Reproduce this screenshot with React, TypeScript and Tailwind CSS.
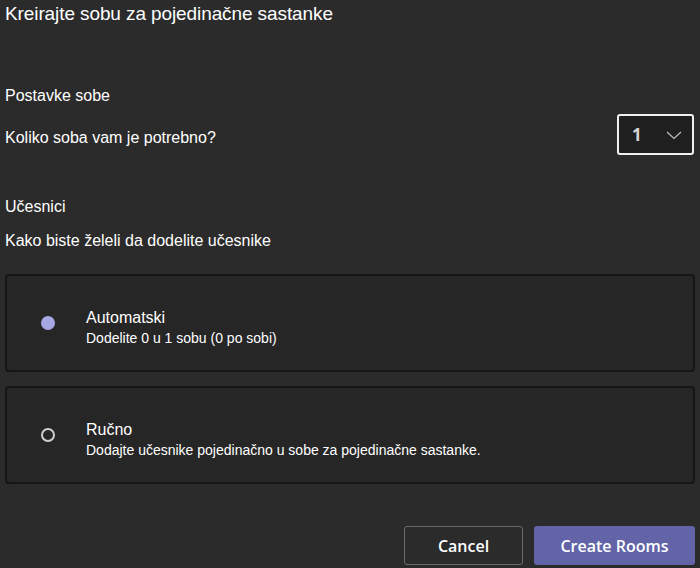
import React from "react";

export default function App() {
  return (
    <div className="w-[700px] h-[568px] bg-[#2b2b2b] text-white px-[5px] flex flex-col" style={{ fontFamily: '"Liberation Sans", Arial, sans-serif' }}>
      <h1 className="pt-[2px] text-[19px] leading-[24px] tracking-[-0.1px]">Kreirajte sobu za pojedinačne sastanke</h1>

      <div className="mt-[60px] text-[16px] leading-[20px]">Postavke sobe</div>
      <div className="mt-[8px] flex justify-between">
        <div className="pt-[14px] text-[16px] leading-[20px]">Koliko soba vam je potrebno?</div>
        <button className="mr-px w-[77px] h-[41px] rounded-[3px] border-2 border-[#f0f0f0] bg-[#1f1f1f] flex items-center justify-between pl-[13px] pr-[10px]">
          <span className="text-[17px] font-bold text-[#d6d6d6]" style={{ fontFamily: '"Open Sans", sans-serif' }}>1</span>
          <svg width="16" height="10" viewBox="0 0 16 10" fill="none" stroke="#bdbdbd" strokeWidth="1.2">
            <polyline points="1,2 8,8.5 15,2" />
          </svg>
        </button>
      </div>

      <div className="mt-[42px] text-[16px] leading-[20px]">Učesnici</div>
      <div className="mt-[14px] text-[16px] leading-[20px]">Kako biste želeli da dodelite učesnike</div>

      <div className="mt-[23px] flex flex-col gap-[14px]">
        <Option selected title="Automatski" sub="Dodelite 0 u 1 sobu (0 po sobi)" />
        <Option title="Ručno" sub="Dodajte učesnike pojedinačno u sobe za pojedinačne sastanke." />
      </div>

      <div className="mt-[42px] flex justify-end gap-[11px]" style={{ fontFamily: '"Open Sans", sans-serif' }}>
        <button className="w-[119px] h-[39px] rounded-[3px] border border-[#6a6a6a] text-[16px] font-semibold">Cancel</button>
        <button className="w-[161px] h-[39px] rounded-[3px] bg-[#6264a7] text-[16px] font-semibold">Create Rooms</button>
      </div>
    </div>
  );
}

function Option({ selected, title, sub }: { selected?: boolean; title: string; sub: string }) {
  return (
    <div className="h-[98px] rounded-[4px] border-2 border-[#161616] bg-[#262626] flex items-center">
      {selected ? (
        <span className="ml-[34px] w-[14px] h-[14px] rounded-full bg-[#a7a7e2] shrink-0" />
      ) : (
        <span className="ml-[34px] w-[14px] h-[14px] rounded-full border-2 border-[#d0d0d0] shrink-0" />
      )}
      <div className="ml-[31px] mt-[10px]">
        <div className="text-[16px] leading-[20px]">{title}</div>
        <div className="text-[14px] leading-[20px]">{sub}</div>
      </div>
    </div>
  );
}
